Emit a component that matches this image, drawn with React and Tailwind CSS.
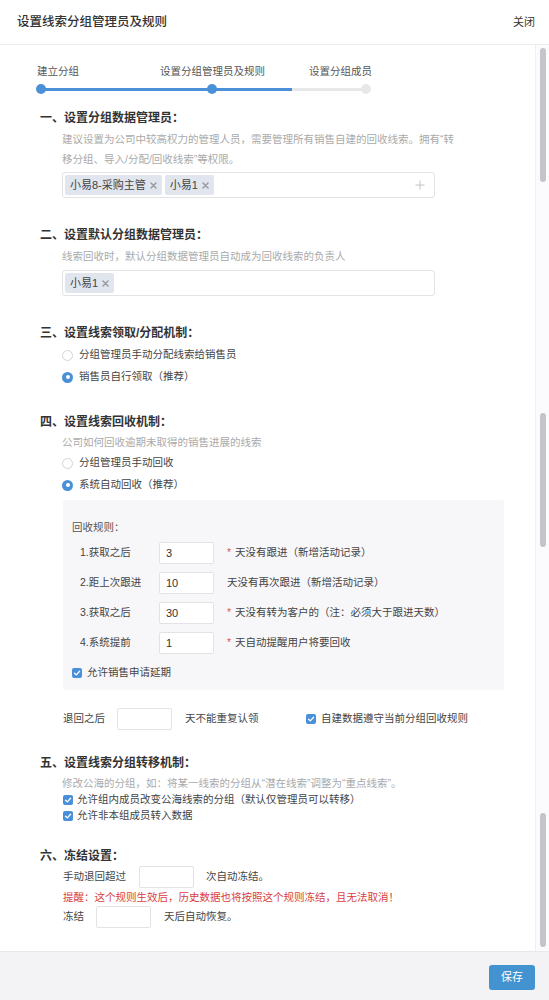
import React from 'react';

const FONT = "font-['Liberation_Sans','Noto_Sans_CJK_SC',sans-serif]";

const Radio = ({ checked, label }) => (
  <div className="flex items-center h-[22px] ml-[22px]">
    {checked ? (
      <span className="w-[11px] h-[11px] rounded-full bg-[#4a90d9] flex items-center justify-center">
        <span className="w-[4px] h-[4px] rounded-full bg-white" />
      </span>
    ) : (
      <span className="w-[11px] h-[11px] rounded-full border border-[#d4d4d8] bg-white" />
    )}
    <span className="ml-[6px] text-[10.5px] text-[#444]">{label}</span>
  </div>
);

const Check = () => (
  <span className="w-[10px] h-[10px] rounded-[2px] bg-[#4a90d9] flex items-center justify-center shrink-0">
    <svg width="8" height="8" viewBox="0 0 8 8">
      <path d="M1.5 4.2 L3.3 5.9 L6.6 2.2" fill="none" stroke="white" strokeWidth="1.3" strokeLinecap="round" strokeLinejoin="round" />
    </svg>
  </span>
);

const Tag = ({ text }) => (
  <span className="inline-flex items-center h-[20px] px-[5px] gap-[4px] rounded-[2px] bg-[#e1e5ee] text-[11px] text-[#444]">
    {text}
    <svg width="7" height="7" viewBox="0 0 7 7">
      <path d="M1 1 L6 6 M6 1 L1 6" stroke="#9a9ca4" strokeWidth="1.5" strokeLinecap="round" />
    </svg>
  </span>
);

const Input = ({ value, w = 'w-[55px]', h = 'h-[22px]' }) => (
  <div className={`${w} ${h} bg-white border border-[#e3e3e6] rounded-[2px] flex items-center pl-[6px] text-[11px] text-[#333]`}>
    {value}
  </div>
);

const Heading = ({ children, mt }) => (
  <div className={`${mt} h-[18px] leading-[18px] text-[12px] font-semibold text-[#333]`}>{children}</div>
);

const rules = [
  { label: '1.获取之后', value: '3', star: true, text: '天没有跟进（新增活动记录）' },
  { label: '2.距上次跟进', value: '10', star: false, text: '天没有再次跟进（新增活动记录）' },
  { label: '3.获取之后', value: '30', star: true, text: '天没有转为客户的（注：必须大于跟进天数）' },
  { label: '4.系统提前', value: '1', star: true, text: '天自动提醒用户将要回收' },
];

export default function App() {
  return (
    <div className={`w-[549px] h-[1000px] bg-white flex flex-col ${FONT}`}>
      <div className="h-[45px] shrink-0 border-b border-[#ececef] flex items-center justify-between pl-[17px] pr-[14px]">
        <span className="text-[12.5px] font-medium text-[#333]">设置线索分组管理员及规则</span>
        <span className="text-[11px] text-[#333]">关闭</span>
      </div>

      <div className="flex-1 flex min-h-0">
        <div className="flex-1 overflow-hidden">
          <div className="pt-[19px]">
            <div className="ml-[37px] flex text-[10.5px] leading-[14px] text-[#555]">
              <span className="w-[123px]">建立分组</span>
              <span className="w-[149px]">设置分组管理员及规则</span>
              <span>设置分组成员</span>
            </div>
            <div className="relative ml-[36px] mt-[6px] w-[335px] h-[10px]">
              <div className="absolute left-[5px] right-[5px] top-[3.5px] h-[3px] bg-[#e8e8eb]" />
              <div className="absolute left-[5px] w-[251px] top-[3.5px] h-[3px] bg-[#4a90d9]" />
              <div className="absolute left-0 top-0 w-[10px] h-[10px] rounded-full bg-[#4a90d9]" />
              <div className="absolute left-[171px] top-0 w-[10px] h-[10px] rounded-full bg-[#4a90d9]" />
              <div className="absolute left-[325px] top-0 w-[10px] h-[10px] rounded-full bg-[#e8e8eb]" />
            </div>
          </div>

          <div className="pl-[40px]">
            <Heading mt="mt-[15px]">一、设置分组数据管理员：</Heading>
            <div className="ml-[22px] mt-[2px] w-[400px] text-[10.5px] leading-[20px] text-[#aaa]">
              建议设置为公司中较高权力的管理人员，需要管理所有销售自建的回收线索。拥有“转移分组、导入/分配/回收线索”等权限。
            </div>
            <div className="ml-[22px] mt-[3px] w-[373px] h-[26px] border border-[#e3e3e6] rounded-[3px] flex items-center px-[2px] gap-[3px]">
              <Tag text="小易8-采购主管" />
              <Tag text="小易1" />
              <svg className="ml-auto mr-[7px]" width="10" height="10" viewBox="0 0 10 10">
                <path d="M5 0.5 V9.5 M0.5 5 H9.5" stroke="#c4c4c8" strokeWidth="1" />
              </svg>
            </div>

            <Heading mt="mt-[28px]">二、设置默认分组数据管理员：</Heading>
            <div className="ml-[22px] mt-[2px] text-[10.5px] leading-[20px] text-[#aaa]">
              线索回收时，默认分组数据管理员自动成为回收线索的负责人
            </div>
            <div className="ml-[22px] mt-[4px] w-[373px] h-[26px] border border-[#e3e3e6] rounded-[3px] flex items-center px-[2px]">
              <Tag text="小易1" />
            </div>

            <Heading mt="mt-[28px]">三、设置线索领取/分配机制：</Heading>
            <div className="mt-[2px]">
              <Radio label="分组管理员手动分配线索给销售员" />
              <Radio checked label="销售员自行领取（推荐）" />
            </div>

            <Heading mt="mt-[25px]">四、设置线索回收机制：</Heading>
            <div className="ml-[22px] mt-[1px] text-[10.5px] leading-[20px] text-[#aaa]">
              公司如何回收逾期未取得的销售进展的线索
            </div>
            <Radio label="分组管理员手动回收" />
            <Radio checked label="系统自动回收（推荐）" />

            <div className="ml-[23px] mt-[4px] w-[441px] h-[190px] bg-[#f7f7fa] rounded-[2px] pt-[19px] pl-[9px]">
              <div className="text-[10.5px] leading-[16px] text-[#555]">回收规则：</div>
              <div className="mt-[3px] pl-[8px]">
                {rules.map(r => (
                  <div key={r.label} className="h-[30px] flex items-center text-[10.5px] text-[#444]">
                    <span className="w-[79px]">{r.label}</span>
                    <Input value={r.value} />
                    <span className="ml-[13px]">
                      {r.star && <span className="text-[#e05a5a] mr-[4px]">*</span>}
                      {r.text}
                    </span>
                  </div>
                ))}
              </div>
              <div className="mt-[6px] h-[18px] flex items-center gap-[5px] text-[10.5px] text-[#444]">
                <Check />
                允许销售申请延期
              </div>
            </div>

            <div className="ml-[23px] mt-[18px] h-[22px] flex items-center text-[10.5px] text-[#444]">
              <span className="w-[54px]">退回之后</span>
              <Input value="" />
              <span className="ml-[13px] w-[121px]">天不能重复认领</span>
              <Check />
              <span className="ml-[5px]">自建数据遵守当前分组回收规则</span>
            </div>

            <Heading mt="mt-[24px]">五、设置线索分组转移机制：</Heading>
            <div className="ml-[22px] mt-[2px] text-[10.5px] leading-[18px] text-[#aaa]">
              修改公海的分组，如：将某一线索的分组从“潜在线索”调整为“重点线索”。
            </div>
            <div className="ml-[23px] h-[16px] flex items-center gap-[4px] text-[10.5px] text-[#444]">
              <Check />
              允许组内成员改变公海线索的分组（默认仅管理员可以转移）
            </div>
            <div className="ml-[23px] h-[16px] flex items-center gap-[4px] text-[10.5px] text-[#444]">
              <Check />
              允许非本组成员转入数据
            </div>

            <Heading mt="mt-[23px]">六、冻结设置：</Heading>
            <div className="ml-[23px] mt-[1px] h-[22px] flex items-center text-[10.5px] text-[#444]">
              <span className="w-[76px]">手动退回超过</span>
              <Input value="" />
              <span className="ml-[12px]">次自动冻结。</span>
            </div>
            <div className="ml-[23px] h-[18px] leading-[18px] text-[10.5px] text-[#d8403f]">
              提醒：这个规则生效后，历史数据也将按照这个规则冻结，且无法取消！
            </div>
            <div className="ml-[23px] h-[22px] flex items-center text-[10.5px] text-[#444]">
              <span className="w-[33px]">冻结</span>
              <Input value="" />
              <span className="ml-[13px]">天后自动恢复。</span>
            </div>
          </div>
        </div>

        <div className="w-[14px] shrink-0 border-l border-[#efeff2] bg-[#fbfafc] flex flex-col items-center pt-[3px]">
          <div className="w-[6px] h-[134px] rounded-full bg-[#c4c4c9]" />
          <div className="w-[6px] h-[134px] rounded-full bg-[#c4c4c9] mt-[231px]" />
          <div className="w-[6px] h-[134px] rounded-full bg-[#c4c4c9] mt-[266px]" />
        </div>
      </div>

      <div className="h-[49px] shrink-0 border-t border-[#e8e8ec] bg-[#f3f2f5] flex items-start justify-end pr-[14px] pt-[13px]">
        <button className="w-[46px] h-[25px] rounded-[3px] bg-[#4293cf] text-white text-[11px]">保存</button>
      </div>
    </div>
  );
}
